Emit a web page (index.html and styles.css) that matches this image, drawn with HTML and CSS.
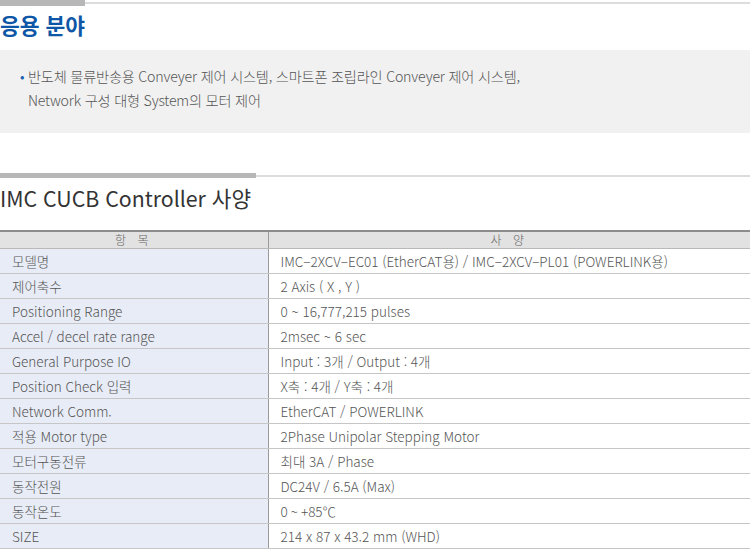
FILE: index.html
```html
<!DOCTYPE html>
<html lang="ko">
<head>
<meta charset="utf-8">
<link rel="stylesheet" href="styles.css">
</head>
<body>
<section class="sec">
  <div class="rule"><span class="rule-bar short"></span><span class="rule-line"></span></div>
  <h2 class="title blue">응용 분야</h2>
  <div class="box">
    <ul class="list">
      <li>반도체 물류반송용 Conveyer 제어 시스템, 스마트폰 조립라인 Conveyer 제어 시스템,<br>Network 구성 대형 System의 모터 제어</li>
    </ul>
  </div>
</section>
<section class="sec sec2">
  <div class="rule"><span class="rule-bar long"></span><span class="rule-line"></span></div>
  <h2 class="title dark">IMC CUCB Controller 사양</h2>
  <table class="spec">
    <thead>
      <tr><th class="c1">항 목</th><th class="c2">사 양</th></tr>
    </thead>
    <tbody>
      <tr><td class="c1">모델명</td><td class="c2">IMC−2XCV−EC01 (EtherCAT용) / IMC−2XCV−PL01 (POWERLINK용)</td></tr>
      <tr><td class="c1">제어축수</td><td class="c2">2 Axis ( X , Y )</td></tr>
      <tr><td class="c1">Positioning Range</td><td class="c2">0 ~ 16,777,215 pulses</td></tr>
      <tr><td class="c1">Accel / decel rate range</td><td class="c2">2msec ~ 6 sec</td></tr>
      <tr><td class="c1">General Purpose IO</td><td class="c2">Input : 3개 / Output : 4개</td></tr>
      <tr><td class="c1">Position Check 입력</td><td class="c2">X축 : 4개 / Y축 : 4개</td></tr>
      <tr><td class="c1">Network Comm.</td><td class="c2">EtherCAT / POWERLINK</td></tr>
      <tr><td class="c1">적용 Motor type</td><td class="c2">2Phase Unipolar Stepping Motor</td></tr>
      <tr><td class="c1">모터구동전류</td><td class="c2">최대 3A / Phase</td></tr>
      <tr><td class="c1">동작전원</td><td class="c2">DC24V / 6.5A (Max)</td></tr>
      <tr><td class="c1">동작온도</td><td class="c2">0 ~ +85℃</td></tr>
      <tr><td class="c1">SIZE</td><td class="c2">214 x 87 x 43.2 mm (WHD)</td></tr>
    </tbody>
  </table>
</section>
</body>
</html>
```
FILE: styles.css
```css
html, body {
  margin: 0;
  padding: 0;
  background: #fff;
}
body {
  font-family: "Noto Sans CJK KR", "Noto Sans", sans-serif;
  color: #555;
  width: 750px;
  overflow: hidden;
}
.rule {
  display: flex;
  align-items: center;
  height: 6px;
}
.rule-bar {
  height: 6px;
  background: #b7b7b7;
}
.rule-bar.short { width: 85px; }
.rule-bar.long { width: 256px; height: 5px; }
.rule-line {
  flex: 1;
  height: 2px;
  background: #dcdcdc;
}
.title {
  margin: 4px 0 10px;
  padding: 0;
  line-height: 30px;
  height: 30px;
}
.title.blue {
  color: #0e56a6;
  font-size: 21.5px;
  font-weight: 700;
}
.box {
  background: #f1f1f1;
  height: 83px;
  box-sizing: border-box;
  padding-top: 14px;
}
.list {
  list-style: none;
  margin: 0;
  padding: 0 0 0 28px;
}
.list li {
  font-size: 14.2px;
  line-height: 24px;
  color: #555;
  font-weight: 300;
  letter-spacing: -0.2px;
}
.list li::before {
  content: "•";
  display: inline-block;
  width: 8px;
  margin-left: -8px;
  color: #1a5fb0;
}
.sec2 {
  margin-top: 40px;
}
.sec2 .rule { height: 5px; }
.title.dark {
  color: #333;
  font-size: 21.3px;
  font-weight: 400;
  margin: 4px 0 16px;
  line-height: 32px;
  height: 32px;
}
.spec {
  width: 750px;
  border-collapse: collapse;
  border-top: 2px solid #8c8c8c;
  font-size: 13.5px;
  font-weight: 300;
  color: #555;
}
.spec th {
  background: #e2e2e2;
  font-weight: 300;
  font-size: 12px;
  height: 16px;
  line-height: 16px;
  padding: 0;
  letter-spacing: 4px;
  border-bottom: 1px solid #b9b9b9;
  color: #666;
}
.spec td {
  height: 24px;
  padding: 0 0 0 12px;
  line-height: 24px;
  border-bottom: 1px solid #c6c6c6;
  white-space: nowrap;
}
.spec .c1 {
  width: 268px;
  box-sizing: border-box;
  border-right: 1px solid #9a9a9a;
}
.spec td.c1 {
  background: #e8ecf6;
}
.spec td.c2 {
  background: #fff;
}
```
